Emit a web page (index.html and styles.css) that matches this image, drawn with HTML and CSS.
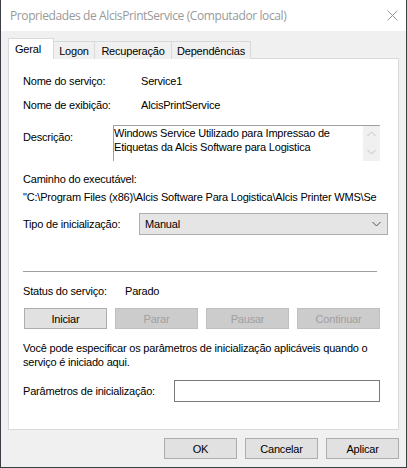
FILE: index.html
```html
<!DOCTYPE html>
<html lang="pt">
<head>
<meta charset="utf-8">
<title>Propriedades</title>
<link rel="stylesheet" href="styles.css">
</head>
<body>
<div class="window">
  <div class="titlebar">
    <span class="title">Propriedades de AlcisPrintService (Computador local)</span>
    <svg class="close" width="11" height="11" viewBox="0 0 11 11"><path d="M0.5 0.5 L10.5 10.5 M10.5 0.5 L0.5 10.5" stroke="#999" stroke-width="1" fill="none"/></svg>
  </div>
  <div class="client">
    <div class="tabs">
      <div class="tab active tab-geral">Geral</div>
      <div class="tab tab-logon">Logon</div>
      <div class="tab tab-rec">Recuperação</div>
      <div class="tab tab-dep">Dependências</div>
    </div>
    <div class="panel">
      <div class="row r-name">
        <span class="label lw-name">Nome do serviço:</span>
        <span>Service1</span>
      </div>
      <div class="row r-disp">
        <span class="label lw-name">Nome de exibição:</span>
        <span>AlcisPrintService</span>
      </div>
      <div class="row r-desc">
        <span class="label lw-desc desc-label">Descrição:</span>
        <div class="desc-box">
          <div class="desc-text">Windows Service Utilizado para Impressao de Etiquetas da Alcis Software para Logistica</div>
          <div class="scroll">
            <svg width="9" height="6" viewBox="0 0 9 6"><path d="M0.5 5 L4.5 1 L8.5 5" stroke="#c2c2c2" fill="none"/></svg>
            <svg width="9" height="6" viewBox="0 0 9 6"><path d="M0.5 1 L4.5 5 L8.5 1" stroke="#c2c2c2" fill="none"/></svg>
          </div>
        </div>
      </div>
      <div class="path-block">
        <div>Caminho do executável:</div>
        <div class="path">"C:\Program Files (x86)\Alcis Software Para Logistica\Alcis Printer WMS\Se</div>
      </div>
      <div class="row r-tipo">
        <span class="label lw-tipo">Tipo de inicialização:</span>
        <div class="select">
          <span>Manual</span>
          <svg width="9" height="6" viewBox="0 0 9 6"><path d="M0.5 1 L4.5 5 L8.5 1" stroke="#555" fill="none"/></svg>
        </div>
      </div>
      <div class="separator"></div>
      <div class="row r-status">
        <span class="label lw-status">Status do serviço:</span>
        <span>Parado</span>
      </div>
      <div class="svc-buttons">
        <div class="btn">Iniciar</div>
        <div class="btn disabled">Parar</div>
        <div class="btn disabled">Pausar</div>
        <div class="btn disabled">Continuar</div>
      </div>
      <p class="info">Você pode especificar os parâmetros de inicialização aplicáveis quando o serviço é iniciado aqui.</p>
      <div class="row r-param">
        <span class="label lw-param">Parâmetros de inicialização:</span>
        <div class="input"></div>
      </div>
    </div>
    <div class="footer">
      <div class="btn fbtn">OK</div>
      <div class="btn fbtn">Cancelar</div>
      <div class="btn fbtn">Aplicar</div>
    </div>
  </div>
</div>
</body>
</html>
```

FILE: styles.css
```css
* { box-sizing: border-box; }
html, body { margin: 0; padding: 0; }
body {
  width: 407px;
  height: 468px;
  background: #f0f0f0;
  font-family: "Liberation Sans", Arial, sans-serif;
  font-size: 11px;
  letter-spacing: -0.2px;
  color: #000;
  overflow: hidden;
}
.window {
  width: 407px;
  height: 468px;
  border-left: 1px solid #3b3f45;
  border-right: 1px solid #3b3f45;
  border-bottom: 1px solid #3b3f45;
  background: #f0f0f0;
  display: flex;
  flex-direction: column;
}
.titlebar {
  height: 31px;
  background: #fff;
  display: flex;
  align-items: center;
  padding-left: 9px;
  padding-right: 8px;
}
.title {
  font-family: "Open Sans", "Noto Sans", sans-serif;
  font-size: 12px;
  color: #999;
  letter-spacing: -0.4px;
}
.close { margin-left: auto; }
.client {
  padding: 7px 7px 0 7px;
  display: flex;
  flex-direction: column;
}
.tabs {
  display: flex;
  align-items: flex-end;
  height: 21px;
  margin-bottom: -1px;
  position: relative;
  z-index: 1;
}
.tab {
  height: 18px;
  border: 1px solid #d9d9d9;
  border-bottom: none;
  background: #f0f0f0;
  margin-left: -1px;
  padding-top: 2px;
  line-height: 14px;
  text-align: center;
}
.tab.active {
  height: 21px;
  background: #fff;
  margin-left: 0;
  padding-top: 3px;
  text-align: left;
  padding-left: 6px;
}
.tab-geral { width: 46px; }
.tab-logon { width: 42px; }
.tab-rec { width: 78px; }
.tab-dep { width: 80px; }
.panel {
  height: 372px;
  background: #fff;
  border: 1px solid #d9d9d9;
  padding: 13px 0 0 14px;
  display: flex;
  flex-direction: column;
}
.row {
  display: flex;
  align-items: center;
}
.label { flex: none; }
.r-name { height: 18px; }
.r-disp { height: 18px; margin-top: 6px; }
.lw-name { width: 118px; }
.r-desc { height: 36px; margin-top: 11px; align-items: flex-start; }
.lw-desc { width: 90px; }
.desc-label { padding-top: 6px; line-height: 13px; }
.desc-box {
  width: 267px;
  height: 36px;
  border-top: 1px solid #a0a0a0;
  border-left: 1px solid #a0a0a0;
  display: flex;
  background: #fff;
}
.desc-text {
  flex: 1;
  line-height: 14px;
}
.scroll {
  width: 17px;
  background: #f0f0f0;
  display: flex;
  flex-direction: column;
  align-items: center;
  justify-content: space-between;
  padding: 5px 0 6px;
}
.path-block {
  margin-top: 9px;
  line-height: 18px;
}
.path {
  width: 360px;
  white-space: nowrap;
  overflow: hidden;
}
.r-tipo { height: 22px; margin-top: 7px; }
.lw-tipo { width: 116px; }
.select {
  width: 249px;
  height: 22px;
  background: #e5e5e5;
  border: 1px solid #adadad;
  display: flex;
  align-items: center;
  justify-content: space-between;
  padding: 0 6px 0 5px;
}
.separator {
  width: 354px;
  height: 1px;
  background: #a0a0a0;
  margin-top: 36px;
}
.r-status { height: 18px; margin-top: 10px; }
.lw-status { width: 102px; }
.svc-buttons {
  display: flex;
  justify-content: space-between;
  width: 356px;
  margin-top: 8px;
  margin-left: 1px;
}
.btn {
  width: 83px;
  height: 21px;
  background: #e1e1e1;
  border: 1px solid #adadad;
  display: flex;
  align-items: center;
  justify-content: center;
}
.btn.disabled {
  background: #cccccc;
  border-color: #bfbfbf;
  color: #a0a0a0;
}
.info {
  margin: 12px 0 0 0;
  width: 360px;
  line-height: 14px;
}
.r-param { height: 22px; margin-top: 11px; }
.lw-param { width: 151px; }
.input {
  width: 206px;
  height: 22px;
  border: 1px solid #7a7a7a;
  background: #fff;
}
.footer {
  display: flex;
  justify-content: flex-end;
  gap: 8px;
  margin-top: 8px;
}
.fbtn { width: 73px; }
```
